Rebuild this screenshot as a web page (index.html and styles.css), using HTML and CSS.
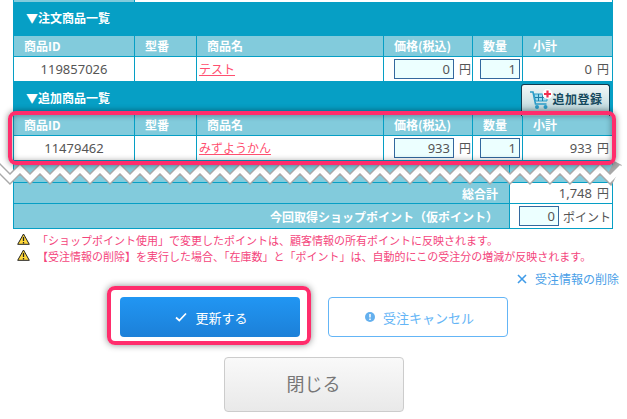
FILE: index.html
```html
<!DOCTYPE html>
<html lang="ja">
<head>
<meta charset="utf-8">
<title>受注情報</title>
<link rel="stylesheet" href="styles.css">
</head>
<body>
<div class="sheet">
  <table class="items">
    <colgroup><col class="c1"><col class="c2"><col class="c3"><col class="c4"><col class="c5"><col class="c6"></colgroup>
    <tr class="strip"><td class="strip-head"></td><td colspan="5" class="strip-blank"></td></tr>
    <tr class="band"><td colspan="6"><div class="band-in"><span>▼注文商品一覧</span></div></td></tr>
    <tr class="head"><th>商品ID</th><th>型番</th><th>商品名</th><th>価格(税込)</th><th>数量</th><th>小計</th></tr>
    <tr class="row">
      <td class="id">119857026</td><td></td><td class="name"><a href="#">テスト</a></td>
      <td class="price"><div class="field"><input class="inp w60" value="0"><span>円</span></div></td>
      <td class="qty"><input class="inp w40" value="1"></td>
      <td class="sum"><span class="num">0</span>円</td>
    </tr>
    <tr class="band"><td colspan="6"><div class="band-in"><span>▼追加商品一覧</span>
      <button class="add" type="button">
        <svg class="cart" viewBox="0 0 24 22" width="24" height="22"><path d="M1 4h3l2.500 12h11" fill="none" stroke="#2a9cc8" stroke-width="1.600"/><path d="M5 6h13v7H6.500z" fill="#9adcef" stroke="#2a9cc8"/><path d="M9.500 6v7M13.500 6v7M6 9.500h12" stroke="#1f7fa8"/><circle cx="8" cy="19" r="2" fill="#2a9cc8"/><circle cx="16.500" cy="19" r="2" fill="#2a9cc8"/><circle cx="18.500" cy="6" r="5" fill="#fff"/><path d="M18.500 2.500v7M15 6h7" stroke="#f0304f" stroke-width="2.200"/></svg>追加登録</button></div></td></tr>
    <tr class="head"><th>商品ID</th><th>型番</th><th>商品名</th><th>価格(税込)</th><th>数量</th><th>小計</th></tr>
    <tr class="row">
      <td class="id">11479462</td><td></td><td class="name"><a href="#">みずようかん</a></td>
      <td class="price"><div class="field"><input class="inp w60" value="933"><span>円</span></div></td>
      <td class="qty"><input class="inp w40" value="1"></td>
      <td class="sum"><span class="num">933</span>円</td>
    </tr>
  </table>
  <table class="totals">
    <colgroup><col class="t1"><col class="t2"></colgroup>
    <tr class="gap"><td></td><td></td></tr>
    <tr class="t-a"><th>総合計</th><td class="sum"><span class="num">1,748</span>円</td></tr>
    <tr class="t-b"><th>今回取得ショップポイント（仮ポイント）</th><td class="pts"><input class="inp w40" value="0"><span>ポイント</span></td></tr>
  </table>
  <svg class="zig" width="627" height="34" viewBox="0 0 627 34"><g fill="none" stroke-linejoin="miter"><path class="zig-o" d="M-6 3l16 16 10-10 10 10 10-10 10 10 10-10 10 10 10-10 10 10 10-10 10 10 10-10 10 10 10-10 10 10 10-10 10 10 10-10 10 10 10-10 10 10 10-10 10 10 10-10 10 10 10-10 10 10 10-10 10 10 10-10 10 10 10-10 10 10 10-10 10 10 10-10 10 10 10-10 10 10 10-10 10 10 10-10 10 10 10-10 10 10 10-10 10 10 10-10 10 10 10-10 10 10 10-10 10 10 10-10 10 10 10-10 10 10 10-10 10 10 10-10 10 10 8-16"/><path class="zig-i" d="M-6 3l16 16 10-10 10 10 10-10 10 10 10-10 10 10 10-10 10 10 10-10 10 10 10-10 10 10 10-10 10 10 10-10 10 10 10-10 10 10 10-10 10 10 10-10 10 10 10-10 10 10 10-10 10 10 10-10 10 10 10-10 10 10 10-10 10 10 10-10 10 10 10-10 10 10 10-10 10 10 10-10 10 10 10-10 10 10 10-10 10 10 10-10 10 10 10-10 10 10 10-10 10 10 10-10 10 10 10-10 10 10 10-10 10 10 10-10 10 10 10-10 10 10 10-10 10 10 8-16"/></g></svg>
  <div class="mark mark-table"></div>
</div>
<ul class="notes">
  <li><svg class="warn" viewBox="0 0 13 12" width="13" height="12"><path d="M6.500 1L12.300 11.300H.7z" fill="#ffd83a" stroke="#222" stroke-linejoin="round"/><path d="M6.500 4v4M6.500 9v1.500" stroke="#222" stroke-width="1.300"/></svg><span>「ショップポイント使用」で変更したポイントは、顧客情報の所有ポイントに反映されます。</span></li>
  <li><svg class="warn" viewBox="0 0 13 12" width="13" height="12"><path d="M6.500 1L12.300 11.300H.7z" fill="#ffd83a" stroke="#222" stroke-linejoin="round"/><path d="M6.500 4v4M6.500 9v1.500" stroke="#222" stroke-width="1.300"/></svg><span>【受注情報の削除】を実行した場合、「在庫数」と「ポイント」は、自動的にこの受注分の増減が反映されます。</span></li>
</ul>
<div class="del"><a href="#"><svg viewBox="0 0 10 10" width="10" height="10"><path d="M1 1l8 8M9 1L1 9" stroke="#3f9be8" stroke-width="1.600" fill="none"/></svg>受注情報の削除</a></div>
<div class="actions">
  <div class="marked">
    <button class="btn primary" type="button"><svg viewBox="0 0 12 10" width="12" height="10"><path d="M1 5.500l3.300 3L11 1.500" fill="none" stroke="#fff" stroke-width="1.700"/></svg>更新する</button>
    <div class="mark mark-btn"></div>
  </div>
  <button class="btn ghost" type="button"><svg viewBox="0 0 10 10" width="10" height="10"><circle cx="5" cy="5" r="5" fill="#64b0ee"/><path d="M5 2v3.600M5 6.600v1.400" stroke="#fff" stroke-width="1.500"/></svg>受注キャンセル</button>
</div>
<div class="closing"><button class="close" type="button">閉じる</button></div>
</body>
</html>
```
FILE: styles.css
```css
* { box-sizing: border-box; }
html, body { margin: 0; padding: 0; background: #fff; }
body { width: 627px; height: 419px; overflow: hidden; font-family: "Noto Sans CJK JP", "Noto Sans", sans-serif; font-size: 12px; color: #555; }
.sheet { position: relative; margin-left: 13px; width: 600px; }
table { border-collapse: separate; border-spacing: 0; table-layout: fixed; width: 600px; border-left: 1px solid #069fc5; }
td, th { padding: 0; border-right: 1px solid #069fc5; border-bottom: 1px solid #069fc5; }
.c1 { width: 121px; } .c2 { width: 62px; } .c3 { width: 187px; } .c4 { width: 89px; } .c5 { width: 50px; } .c6 { width: 90px; }
.strip td { height: 2px; border-bottom: 0; line-height: 0; font-size: 0; }
.strip-head { background: #82cbdc; }
.strip-blank { background: #fff; border-right: 1px solid #069fc5; }
.band td { background: #069fc5; height: 33px; border-bottom: 0; }
.band-in { display: flex; align-items: flex-start; height: 33px; padding: 7px 2px 0 12px; color: #fff; font-weight: 700; line-height: 18px; }
.band:nth-child(2) td, .band:nth-child(2) .band-in { height: 34px; }
.band-in > span { flex: 1; }
.add { display: flex; align-items: center; justify-content: center; gap: 0; width: 89px; height: 32px; margin: -5px 0 -5px; padding: 0 0 4px; border: 1px solid #123c50; border-bottom: 0; border-radius: 3px 3px 0 0; background: linear-gradient(#f2f7f7, #d8e8ea 45%, #a9ccd2); color: #164a5e; font: 700 12px/1 "Noto Sans CJK JP", sans-serif; letter-spacing: .5px; }
.cart { flex: none; margin-left: 0; }
.head th { height: 21px; background: #82cbdc; color: #fff; font-size: 12px; font-weight: 700; text-align: left; padding: 0 0 1px 10px; line-height: 18px; }
.row td { height: 25px; background: #fff; vertical-align: middle; line-height: 16px; }
.id { text-align: center; font-family: "Noto Sans", sans-serif; font-size: 13px; }
.name { padding-left: 2px; }
.name a { color: #ff4f70; text-decoration: underline; }
.field { display: flex; align-items: center; gap: 5px; padding-left: 10px; }
.inp { display: block; height: 20px; padding: 0 3px 0 0; border: 1px solid #33689e; border-radius: 0; background: #ecffff; color: #555; font: 13px/18px "Noto Sans", sans-serif; text-align: right; outline: 0; }
.w60 { width: 60px; }
.w40 { width: 40px; }
.qty .inp { margin-left: 7px; }
.sum { text-align: right; padding-right: 3px; white-space: nowrap; }
.num { font-family: "Noto Sans", sans-serif; font-size: 13px; margin-right: 5px; }
.t1 { width: 496px; } .t2 { width: 103px; }
.gap td { height: 22px; background: #82cbdc; }
.t-a th, .t-b th { background: #82cbdc; color: #fff; font-size: 12px; font-weight: 700; text-align: right; padding-right: 11px; }
.t-a th, .t-a td { height: 21px; }
.t-a td { background: #fff; }
.t-b th, .t-b td { height: 25px; }
.t-b td { background: #fff; }
.pts { display: flex; align-items: center; gap: 4px; height: 25px; padding-left: 9px; white-space: nowrap; }
.zig { position: absolute; left: -13px; top: 160px; }
.zig-o { stroke: #a9a9a9; stroke-width: 8.500; }
.zig-i { stroke: #fff; stroke-width: 5.500; }
.mark { position: absolute; border: 4px solid #ff2d6c; border-radius: 8px; box-shadow: 0 0 6px rgba(0,0,0,.45), inset 0 0 6px rgba(0,0,0,.4); pointer-events: none; }
.mark-table { left: -5px; top: 111px; width: 608px; height: 54px; }
.notes { list-style: none; margin: 3px 0 0; padding: 0 0 0 17px; color: #f4457c; font-size: 11px; }
.notes li { display: flex; align-items: center; gap: 7px; height: 16px; white-space: nowrap; }
.warn { flex: none; margin-top: -3px; }
.del { display: flex; justify-content: flex-end; padding: 7px 8px 0 0; line-height: 16px; }
.del a { display: flex; align-items: center; gap: 8px; color: #4a9fe8; text-decoration: none; }
.actions { display: flex; justify-content: center; gap: 28px; margin-top: 10px; }
.marked { position: relative; }
.btn { display: flex; align-items: center; justify-content: center; gap: 8px; width: 180px; height: 40px; padding: 0 0 0 4px; border-radius: 4px; font: 13px/1 "Noto Sans CJK JP", sans-serif; }
.primary { border: 0; background: linear-gradient(#2196f3, #1c80d8); color: #fff; }
.ghost { border: 1px solid #64b5f6; background: #fff; color: #64b5f6; }
.mark-btn { left: -13px; top: -11px; width: 204px; height: 59px; box-shadow: 0 0 7px rgba(0,0,0,.45); }
.closing { display: flex; justify-content: center; margin-top: 20px; }
.close { width: 180px; height: 55px; padding: 0 0 4px; border: 1px solid #ccc; border-radius: 4px; background: linear-gradient(#f9f9f9, #e9e9e9); color: #777; font: 18px/1 "Noto Sans CJK JP", sans-serif; }
```
